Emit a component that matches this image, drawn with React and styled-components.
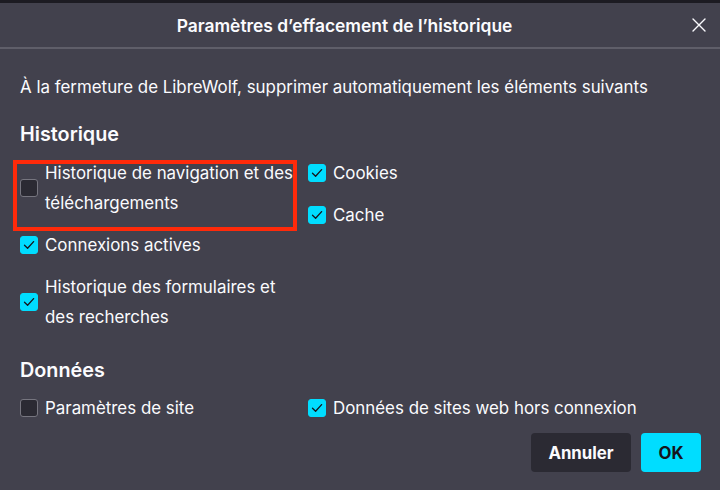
import React from 'react'
import styled, { createGlobalStyle } from 'styled-components'

const GlobalStyle = createGlobalStyle`
  html, body {
    margin: 0;
    padding: 0;
    background: #42414d;
    font-family: Inter, "Noto Sans", "Liberation Sans", sans-serif;
    color: #fbfbfe;
    -webkit-font-smoothing: antialiased;
  }
`

const Window = styled.div`
  width: 720px;
  height: 490px;
  overflow: hidden;
  background: #42414d;
  display: flex;
  flex-direction: column;
`

const BehindStrip = styled.div`
  height: 3px;
  background: #1c1b22;
  flex-shrink: 0;
`

const TitleBar = styled.div`
  height: 44px;
  display: flex;
  align-items: center;
  padding-right: 11px;
  border-bottom: 2px solid #5f5e69;
  flex-shrink: 0;
`

const Title = styled.h1`
  flex: 1;
  margin: 0;
  text-align: center;
  font-size: 17.4px;
  font-weight: 600;
`

const CloseButton = styled.button`
  width: 20px;
  height: 20px;
  padding: 0;
  border: none;
  background: none;
  color: #fbfbfe;
  display: flex;
  align-items: center;
  justify-content: center;
  cursor: pointer;
`

const Body = styled.div`
  padding: 28px 19px 0 20px;
  display: flex;
  flex-direction: column;
`

const Description = styled.p`
  margin: 0;
  font-size: 16.9px;
  line-height: 20px;
  white-space: nowrap;
`

const SectionTitle = styled.h2`
  margin: ${p => p.$top}px 0 ${p => p.$bottom}px;
  font-size: 19.8px;
  line-height: 24px;
  font-weight: 600;
`

const OptionGrid = styled.div`
  display: grid;
  grid-template-columns: 288px 1fr;
  align-items: start;
`

const Column = styled.div`
  display: flex;
  flex-direction: column;
  gap: 12px;
`

const Option = styled.label`
  position: relative;
  display: flex;
  align-items: center;
  gap: 7px;
  font-size: 16.9px;
  line-height: 30px;
  white-space: nowrap;
  cursor: pointer;

  ${p => p.$highlighted && `
    &::after {
      content: '';
      position: absolute;
      top: 2px;
      left: -7px;
      right: 11px;
      bottom: -13px;
      border: 4px solid #ff2a0a;
      pointer-events: none;
    }
  `}
`

const Box = styled.span`
  width: 18px;
  height: 18px;
  flex-shrink: 0;
  box-sizing: border-box;
  border-radius: 3px;
  display: flex;
  align-items: center;
  justify-content: center;
  background: ${p => (p.$checked ? '#00ddff' : '#2b2a33')};
  border: 1px solid ${p => (p.$checked ? '#00ddff' : '#76757f')};
`

const Footer = styled.div`
  display: flex;
  justify-content: flex-end;
  gap: 10px;
  margin-top: 10px;
`

const Button = styled.button`
  height: 39px;
  min-width: ${p => p.$width}px;
  border: none;
  border-radius: 4px;
  font-family: inherit;
  font-size: 16.8px;
  font-weight: 700;
  background: ${p => (p.$primary ? '#00ddff' : '#2b2a33')};
  color: ${p => (p.$primary ? '#15141a' : '#fbfbfe')};
  cursor: pointer;
`

function Checkbox({ checked }) {
  return (
    <Box $checked={checked}>
      {checked && (
        <svg width="14" height="14" viewBox="0 0 14 14" fill="none">
          <path d="M2.5 7.2 L5.6 10.2 L11.6 3.6" stroke="#15141a" strokeWidth="1.3" strokeLinecap="round" strokeLinejoin="round" />
        </svg>
      )}
    </Box>
  )
}

function CheckOption({ checked, highlighted, children }) {
  return (
    <Option $highlighted={highlighted}>
      <Checkbox checked={checked} />
      <span>{children}</span>
    </Option>
  )
}

export default function App() {
  return (
    <Window>
      <GlobalStyle />
      <BehindStrip />
      <TitleBar>
        <Title>Paramètres d’effacement de l’historique</Title>
        <CloseButton aria-label="Fermer">
          <svg width="14" height="14" viewBox="0 0 14 14">
            <path d="M1 1 L13 13 M13 1 L1 13" stroke="#fbfbfe" strokeWidth="1.4" strokeLinecap="round" />
          </svg>
        </CloseButton>
      </TitleBar>

      <Body>
        <Description>
          À la fermeture de LibreWolf, supprimer automatiquement les éléments suivants
        </Description>

        <SectionTitle $top={25} $bottom={12}>Historique</SectionTitle>
        <OptionGrid>
          <Column>
            <CheckOption highlighted>
              Historique de navigation et des<br />téléchargements
            </CheckOption>
            <CheckOption checked>Connexions actives</CheckOption>
            <CheckOption checked>
              Historique des formulaires et<br />des recherches
            </CheckOption>
          </Column>
          <Column>
            <CheckOption checked>Cookies</CheckOption>
            <CheckOption checked>Cache</CheckOption>
          </Column>
        </OptionGrid>

        <SectionTitle $top={26} $bottom={11}>Données</SectionTitle>
        <OptionGrid>
          <Column>
            <CheckOption>Paramètres de site</CheckOption>
          </Column>
          <Column>
            <CheckOption checked>Données de sites web hors connexion</CheckOption>
          </Column>
        </OptionGrid>

        <Footer>
          <Button $width={100}>Annuler</Button>
          <Button $width={60} $primary>OK</Button>
        </Footer>
      </Body>
    </Window>
  )
}
